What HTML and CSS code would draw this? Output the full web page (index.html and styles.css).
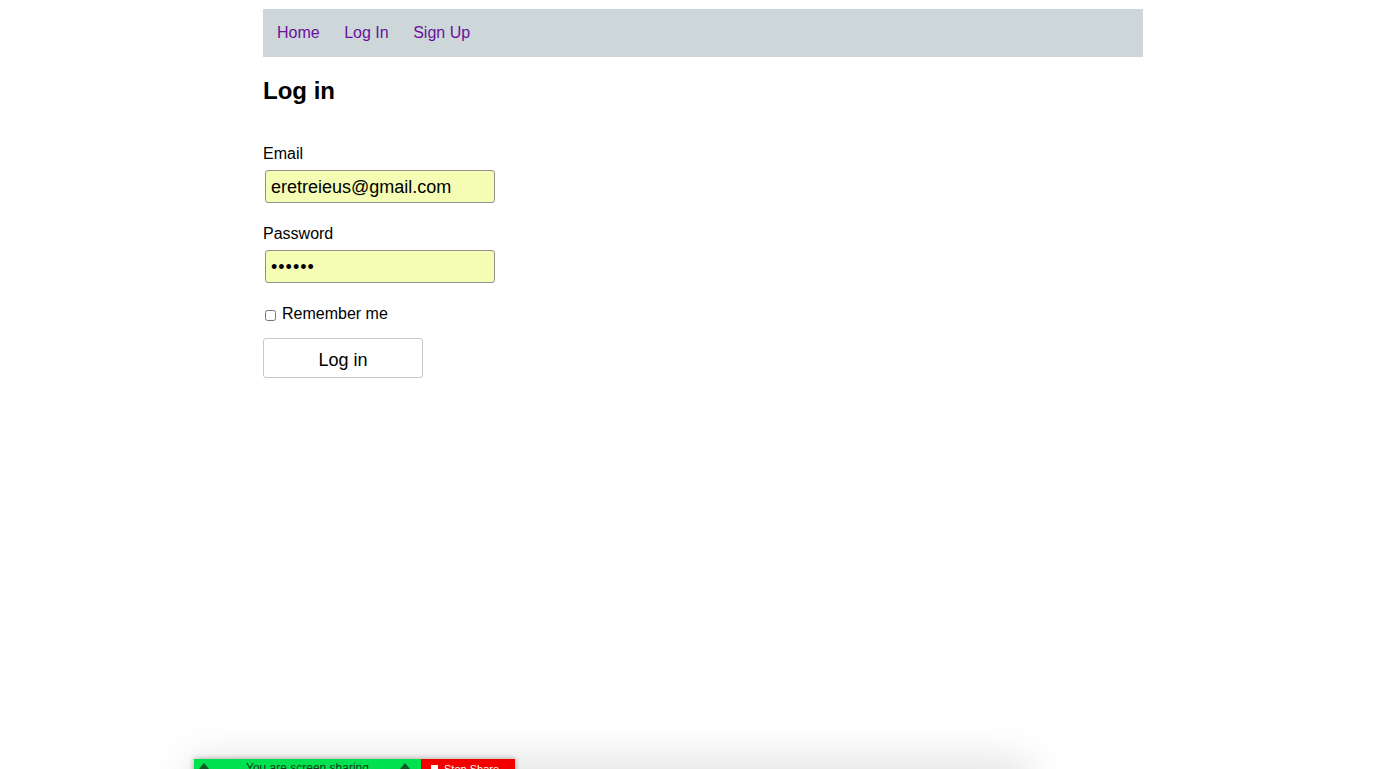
FILE: index.html
```html
<!DOCTYPE html>
<html>
<head>
<meta charset="utf-8">
<title>Log in</title>
<link rel="stylesheet" href="styles.css">
</head>
<body>
<div class="container">
  <nav class="nav">
    <a href="#" class="nav-link">Home</a>
    <a href="#" class="nav-link">Log In</a>
    <a href="#" class="nav-link">Sign Up</a>
  </nav>
  <h1 class="title">Log in</h1>
  <form class="form">
    <label class="label">Email</label>
    <input class="field field-email" type="email" value="eretreieus@gmail.com">
    <label class="label label-gap">Password</label>
    <input class="field field-pass" type="password" value="secret">
    <label class="remember"><input type="checkbox" class="check"> Remember me</label>
    <button type="button" class="submit">Log in</button>
  </form>
</div>
<div class="share-shadow"></div>
<div class="share-bar">
  <div class="share-green">
    <span class="share-icon"></span>
    <span class="share-text">You are screen sharing</span>
    <span class="share-icon share-icon-right"></span>
  </div>
  <div class="share-red"><span class="stop-square"></span>Stop Share</div>
</div>
</body>
</html>
```

FILE: styles.css
```css
html, body {
  background: #ffffff;
}
body {
  margin: 9px 0 0 8px;
  font-family: "Liberation Sans", Arial, sans-serif;
  color: #000;
  overflow: hidden;
  height: 760px;
}
.container {
  width: 880px;
  margin: 0 auto;
}
.nav {
  background: #cdd7da;
  height: 48px;
  display: flex;
  align-items: center;
  padding: 0 14px;
  gap: 24.5px;
}
.nav-link {
  color: #6a0f9c;
  text-decoration: none;
  font-size: 16px;
  line-height: 18px;
}
.title {
  font-size: 24px;
  font-weight: bold;
  line-height: 28px;
  margin: 20px 0 0 0;
}
.form {
  display: flex;
  flex-direction: column;
  align-items: flex-start;
  margin-top: 40px;
}
.label {
  font-size: 16px;
  line-height: 18px;
}
.label-gap {
  margin-top: 22px;
}
.field {
  box-sizing: border-box;
  width: 230px;
  height: 33px;
  margin: 7px 0 0 2px;
  padding: 1px 5px 0 5px;
  font-family: "Liberation Sans", Arial, sans-serif;
  font-size: 18px;
  color: #000;
  background: #f5fdb5;
  border: 1px solid #8f8f8f;
  border-radius: 3px;
  outline: none;
}
.field-pass {
  letter-spacing: 1px;
}
.remember {
  display: flex;
  align-items: center;
  margin-top: 22px;
  font-size: 16px;
  line-height: 18px;
}
.check {
  width: 11px;
  height: 11px;
  margin: 2px 6px 0 2px;
}
.submit {
  margin-top: 15px;
  width: 160px;
  height: 40px;
  background: #fff;
  border: 1px solid #c8c8c8;
  border-radius: 3px;
  font-family: "Liberation Sans", Arial, sans-serif;
  font-size: 18px;
  color: #000;
  padding: 5px 0 0 0;
}
.share-shadow {
  position: fixed;
  left: 200px;
  top: 770px;
  width: 820px;
  height: 20px;
  box-shadow: 0 0 40px 10px rgba(0,0,0,0.12);
}
.share-bar {
  position: fixed;
  left: 194px;
  top: 759px;
  width: 321px;
  height: 26px;
  display: flex;
  box-shadow: 0 0 6px rgba(0,0,0,0.35);
  font-family: "Liberation Sans", Arial, sans-serif;
  font-size: 12px;
}
.share-green {
  width: 227px;
  background: #00e150;
  display: flex;
  align-items: flex-start;
  position: relative;
}
.share-icon {
  position: absolute;
  left: 5px;
  top: 4px;
  width: 0;
  height: 0;
  border-left: 5px solid transparent;
  border-right: 5px solid transparent;
  border-bottom: 6px solid #0f5a22;
}
.share-icon-right {
  left: 206px;
}
.share-text {
  margin: 2px 0 0 52px;
  color: #1a3a1a;
  line-height: 14px;
}
.share-red {
  width: 94px;
  background: #f20000;
  color: #fff;
  display: flex;
  align-items: flex-start;
  padding-left: 10px;
  line-height: 14px;
  padding-top: 3px;
  box-sizing: border-box;
  font-size: 11px;
}
.stop-square {
  width: 7px;
  height: 7px;
  background: #fff;
  margin: 3px 6px 0 0;
}
```
